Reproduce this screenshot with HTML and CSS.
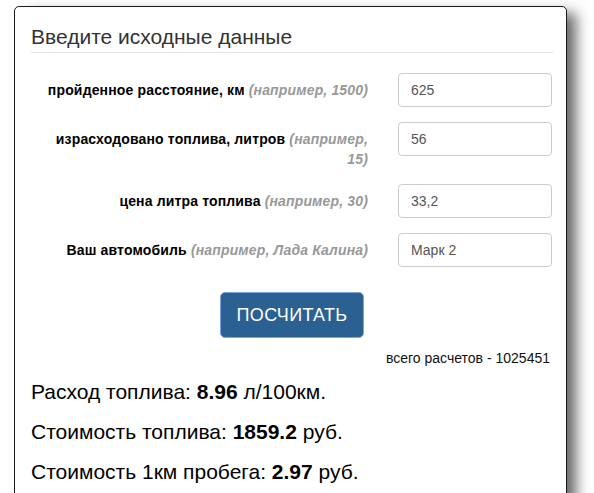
FILE: index.html
```html
<!DOCTYPE html>
<html lang="ru">
<head>
<meta charset="utf-8">
<title>Расход топлива</title>
<link rel="stylesheet" href="styles.css">
</head>
<body>
<div class="card">
  <h2 class="title">Введите исходные данные</h2>
  <form class="form">
    <div class="row">
      <label class="label">пройденное расстояние, км <span class="hint">(например, 1500)</span></label>
      <input class="input" type="text" value="625">
    </div>
    <div class="row">
      <label class="label">израсходовано топлива, литров <span class="hint">(например, 15)</span></label>
      <input class="input" type="text" value="56">
    </div>
    <div class="row">
      <label class="label">цена литра топлива <span class="hint">(например, 30)</span></label>
      <input class="input" type="text" value="33,2">
    </div>
    <div class="row">
      <label class="label">Ваш автомобиль <span class="hint">(например, Лада Калина)</span></label>
      <input class="input" type="text" value="Марк 2">
    </div>
    <div class="actions">
      <button class="btn" type="button">ПОСЧИТАТЬ</button>
    </div>
  </form>
  <div class="counter">всего расчетов - 1025451</div>
  <div class="results">
    <p class="result">Расход топлива: <b>8.96</b> л/100км.</p>
    <p class="result">Стоимость топлива: <b>1859.2</b> руб.</p>
    <p class="result">Стоимость 1км пробега: <b>2.97</b> руб.</p>
  </div>
</div>
</body>
</html>
```
FILE: styles.css
```css
html, body {
  margin: 0;
  padding: 0;
  background: #fff;
  overflow: hidden;
}
body {
  padding: 6px 0 0 14px;
  font-family: "Liberation Sans", Arial, sans-serif;
  color: #000;
}
.card {
  box-sizing: border-box;
  width: 553px;
  border: 1px solid #1a1a1a;
  border-radius: 5px 5px 0 0;
  background: #fff;
  padding: 19px 13px 40px 16px;
  box-shadow: 12px 4px 14px -3px rgba(0, 0, 0, 0.6);
}
.title {
  margin: 0;
  font-size: 21px;
  line-height: 22px;
  font-weight: normal;
  color: #333;
  padding-bottom: 4px;
  border-bottom: 1px solid #e5e5e5;
}
.form {
  margin-top: 20px;
}
.row {
  display: grid;
  grid-template-columns: 337px 154px;
  column-gap: 30px;
  margin-bottom: 15px;
  align-items: start;
}
.label {
  text-align: right;
  padding: 7px 0 0 10px;
  font-size: 14px;
  line-height: 20px;
  letter-spacing: 0.15px;
  font-weight: bold;
  color: #000;
}
.hint {
  color: #999;
  font-style: italic;
}
.input {
  box-sizing: border-box;
  width: 154px;
  height: 34px;
  margin: 0;
  padding: 6px 12px;
  border: 1px solid #ccc;
  border-radius: 4px;
  font-family: "Liberation Sans", Arial, sans-serif;
  font-size: 14px;
  color: #555;
  background: #fff;
}
.actions {
  display: flex;
  justify-content: center;
  margin-top: 25px;
}
.btn {
  box-sizing: border-box;
  height: 46px;
  padding: 10px 16px;
  border: 1px solid #79a6e2;
  border-radius: 5px;
  background: #2b6192;
  color: #fff;
  font-family: "Liberation Sans", Arial, sans-serif;
  font-size: 18px;
  line-height: 24px;
  letter-spacing: 0.3px;
}
.counter {
  margin-top: 10px;
  text-align: right;
  padding-right: 3px;
  font-size: 14px;
  line-height: 20px;
  color: #111;
}
.results {
  margin-top: 14px;
}
.result {
  margin: 0 0 20px;
  font-size: 21px;
  line-height: 20px;
  color: #000;
}
```
